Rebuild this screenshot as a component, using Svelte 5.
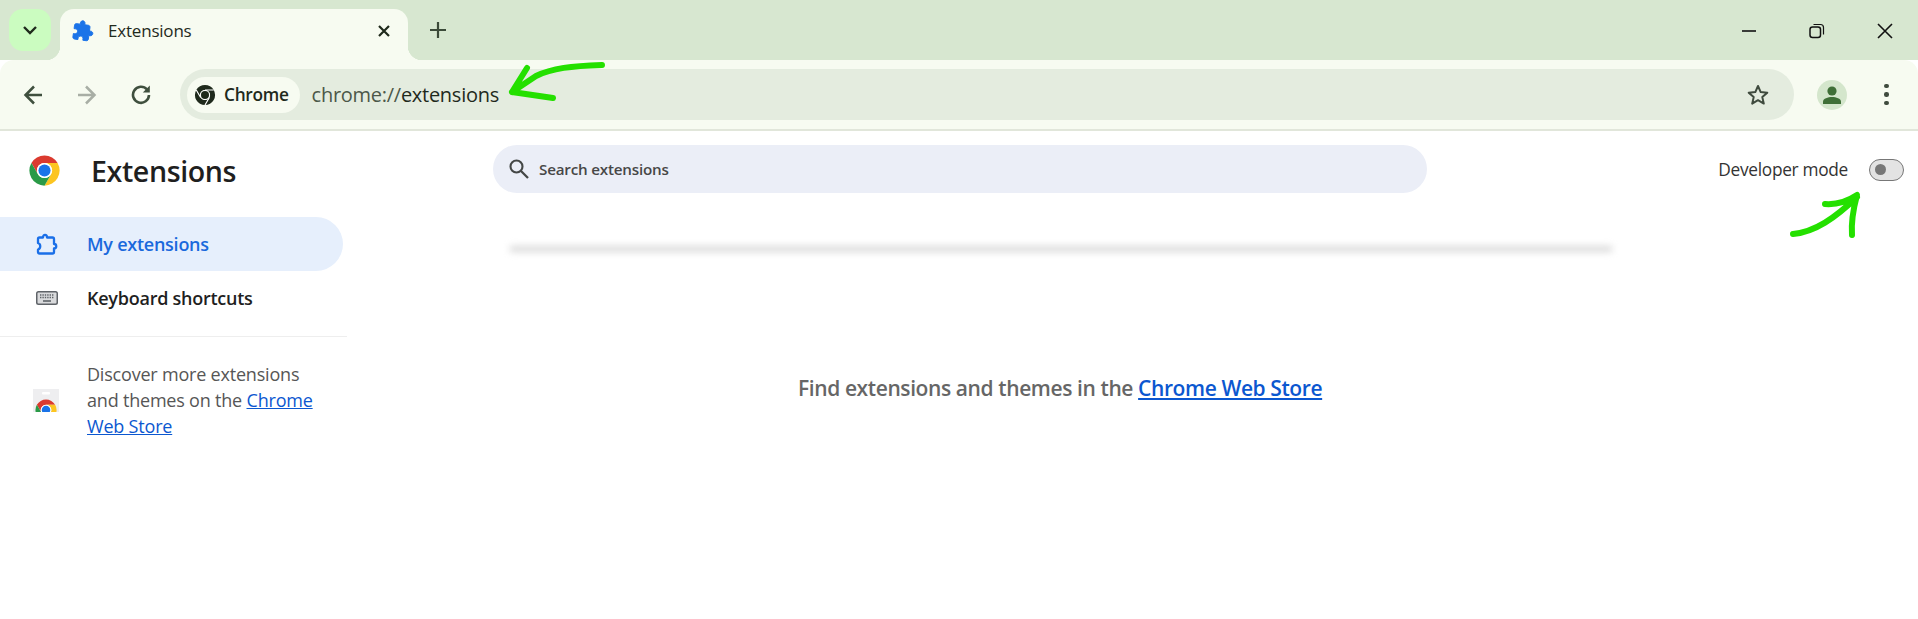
<script lang="ts">
  const promoUrl = "Chrome Web Store";
</script>

{#snippet chromeLogo(red: string, yellow: string, green: string, ring: string, dot: string)}
  <path fill={red} d="M43.05 13A22 22 0 0 0 4.95 13L14.47 29.5A11 11 0 0 1 24 13Z" />
  <path fill={yellow} d="M24 46A22 22 0 0 0 43.05 13L24 13A11 11 0 0 1 33.53 29.5Z" />
  <path fill={green} d="M4.95 13A22 22 0 0 0 24 46L33.53 29.5A11 11 0 0 1 14.47 29.5Z" />
  <circle cx="24" cy="24" r="11" fill={ring} />
  <circle cx="24" cy="24" r="8.8" fill={dot} />
{/snippet}

<div class="page">
  <header class="tabstrip">
    <button class="tab-search" aria-label="Search tabs">
      <svg width="16" height="10" viewBox="0 0 16 10"><path d="M2 2l6 6 6-6" fill="none" stroke="#1f2a1c" stroke-width="2.4" /></svg>
    </button>
    <div class="tab">
      <svg class="tab-icon" width="22" height="22" viewBox="0 0 24 24">
        <path fill="#1a73e8" stroke="#1a73e8" stroke-width="1" stroke-linejoin="round" transform="rotate(8 12 12)" d="M20.5 11H19V7c0-1.1-.9-2-2-2h-4V3.5C13 2.12 11.88 1 10.5 1S8 2.12 8 3.5V5H4c-1.1 0-1.99.9-1.99 2v3.8H3.5c1.49 0 2.7 1.21 2.7 2.7s-1.21 2.7-2.7 2.7H2V20c0 1.1.9 2 2 2h3.8v-1.5c0-1.49 1.21-2.7 2.7-2.7 1.49 0 2.7 1.21 2.7 2.7V22H17c1.1 0 2-.9 2-2v-4h1.5c1.38 0 2.5-1.12 2.5-2.5S21.88 11 20.5 11z" />
      </svg>
      <span class="tab-title">Extensions</span>
      <svg class="tab-close" width="14" height="14" viewBox="0 0 14 14"><path d="M2 2l10 10M12 2L2 12" stroke="#1f2a1c" stroke-width="2.2" /></svg>
    </div>
    <svg class="new-tab" width="20" height="20" viewBox="0 0 20 20"><path d="M10 2v16M2 10h16" stroke="#3b4a38" stroke-width="2.2" /></svg>
    <div class="window-controls">
      <svg width="16" height="16" viewBox="0 0 16 16"><path d="M1 8h14" stroke="#111" stroke-width="1.6" /></svg>
      <svg width="16" height="16" viewBox="0 0 16 16"><rect x="1" y="4" width="10.5" height="10.5" rx="2.5" fill="none" stroke="#111" stroke-width="1.5" /><path d="M4.5 1.5h7a3 3 0 0 1 3 3v7" fill="none" stroke="#111" stroke-width="1.2" /></svg>
      <svg width="16" height="16" viewBox="0 0 16 16"><path d="M1 1l14 14M15 1L1 15" stroke="#111" stroke-width="1.6" /></svg>
    </div>
  </header>

  <div class="toolbar">
    <svg class="nav-btn" width="20" height="20" viewBox="0 0 20 20"><path d="M19 10H2.500M11 1.500L2.500 10 11 18.500" fill="none" stroke="#3f4f3e" stroke-width="2.500" /></svg>
    <svg class="nav-btn" width="20" height="20" viewBox="0 0 20 20"><path d="M1 10h16.500M9 1.500l8.500 8.500L9 18.500" fill="none" stroke="#a8aea5" stroke-width="2.500" /></svg>
    <svg class="nav-btn" width="20" height="20" viewBox="0 0 20 20"><path d="M16 4.500A8 8 0 1 0 18 10" fill="none" stroke="#3f4f3e" stroke-width="2.600" /><path d="M18.800 0.500V7.500H11.800z" fill="#3f4f3e" /></svg>
    <div class="omnibox">
      <div class="chip">
        <svg width="22" height="22" viewBox="0 0 48 48">
          {@render chromeLogo("#1f2a1c", "#1f2a1c", "#1f2a1c", "#fff", "#1f2a1c")}
          <path d="M43.05 13H24M24 46L33.53 29.5M4.95 13L14.47 29.5" stroke="#fff" stroke-width="2.5" />
        </svg>
        <span>Chrome</span>
      </div>
      <span class="url"><span class="scheme">chrome://</span>extensions</span>
      <svg class="star" width="24" height="24" viewBox="0 0 24 24"><path d="M12 3l2.7 6.1 6.6.6-5 4.4 1.5 6.5-5.8-3.4-5.800 3.4 1.500-6.500-5-4.400 6.600-.6z" fill="none" stroke="#3f4b3e" stroke-width="2" stroke-linejoin="round" /></svg>
    </div>
    <div class="avatar">
      <svg width="20" height="20" viewBox="0 0 20 20"><circle cx="10" cy="6" r="4.600" fill="#3f6f37" /><path d="M1 19v-2.500C1 13.500 6 12 10 12s9 1.500 9 4.500V19z" fill="#3f6f37" /></svg>
    </div>
    <div class="dots"><i></i><i></i><i></i></div>
  </div>

  <main class="main">
    <aside class="sidebar">
      <div class="brand">
        <svg width="33" height="33" viewBox="0 0 48 48">
          {@render chromeLogo("#db3a2f", "#fcc521", "#2a9a47", "#fff", "#1a73e8")}
        </svg>
        <h1>Extensions</h1>
      </div>
      <a class="item active" href="#mine">
        <svg width="22" height="22" viewBox="0 0 22 22">
          <path d="M3.500 4.500H7C7 1 11 1 11 4.500H16.500Q18 4.500 18 6V11C21 11 21 15.500 18 15.500V19Q18 20.500 16.500 20.500H3.500Q2 20.500 2 19V16.500C5 15.500 5 11 2 10V6Q2 4.500 3.500 4.500Z" fill="none" stroke="#1a6fe8" stroke-width="2.300" stroke-linejoin="round" />
        </svg>
        <span>My extensions</span>
      </a>
      <a class="item" href="#keys">
        <svg width="22" height="14" viewBox="0 0 22 14">
          <rect x="0" y="0" width="22" height="14" rx="2.500" fill="#5f6368" />
          <rect x="1.500" y="1.500" width="19" height="11" rx="1" fill="#d9dadc" />
          <path d="M4 4h14M4 6.500h14" stroke="#5f6368" stroke-width="1.600" stroke-dasharray="1.400 1" />
          <path d="M7 10h8" stroke="#5f6368" stroke-width="1.600" />
        </svg>
        <span>Keyboard shortcuts</span>
      </a>
      <div class="promo">
        <svg width="26" height="23" viewBox="0 0 26 23">
          <defs><clipPath id="bag"><rect x="0" y="0" width="26" height="23" /></clipPath></defs>
          <rect width="26" height="23" fill="#eeeef0" />
          <rect x="9" y="3" width="8" height="2.500" rx="1" fill="#fff" />
          <g clip-path="url(#bag)">
            <g transform="translate(1.500 9.500) scale(0.48)">
              {@render chromeLogo("#db3a2f", "#fcc521", "#2a9a47", "#fff", "#1a73e8")}
            </g>
          </g>
        </svg>
        <p>Discover more extensions and themes on the <a href="#store">{promoUrl}</a></p>
      </div>
    </aside>

    <section class="content">
      <div class="topbar">
        <label class="search">
          <svg width="22" height="22" viewBox="0 0 22 22"><circle cx="8.500" cy="8.500" r="6" fill="none" stroke="#444746" stroke-width="2.100" /><path d="M13 13l7 7" stroke="#444746" stroke-width="2.300" /></svg>
          <span>Search extensions</span>
        </label>
        <div class="devmode">
          <span>Developer mode</span>
          <div class="toggle"><i></i></div>
        </div>
      </div>
      <div class="shadow-line"></div>
      <p class="empty">Find extensions and themes in the <a href="#store">{promoUrl}</a></p>
    </section>
  </main>

  <svg class="scribble" width="1918" height="619" viewBox="0 0 1918 619" fill="none" stroke="#24e000" stroke-width="6" stroke-linecap="round" stroke-linejoin="round">
    <path d="M602 65C572 66 552 68 536 76L512 92L553 98M527 68L512 92" />
    <path d="M1793 234C1815 232 1835 218 1857 197M1825 204C1838 205 1848 201 1857 195C1853 210 1851 222 1852 235" />
  </svg>
</div>

<style>
  :global(body) {
    margin: 0;
    background: #fff;
    font-family: "Open Sans", "Noto Sans", sans-serif;
  }

  .page {
    position: relative;
    height: 619px;
    overflow: hidden;
  }

  .tabstrip {
    height: 60px;
    background: #d7e7d0;
    display: flex;
    align-items: flex-start;
    box-sizing: border-box;
    padding: 9px 0 0 9px;
  }

  .tab-search {
    width: 42px;
    height: 42px;
    border: none;
    border-radius: 14px;
    background: #cbfcc0;
    display: flex;
    align-items: center;
    justify-content: center;
    padding: 0;
  }

  .tab {
    position: relative;
    margin-left: 9px;
    width: 348px;
    height: 51px;
    background: #f7fbf1;
    border-radius: 14px 14px 0 0;
    display: flex;
    align-items: center;
    padding: 0 12px 8px 12px;
    box-sizing: border-box;
  }

  .tab::before,
  .tab::after {
    content: "";
    position: absolute;
    bottom: 0;
    width: 14px;
    height: 14px;
    background: radial-gradient(circle at 0 0, transparent 14px, #f7fbf1 14.500px);
  }

  .tab::before {
    left: -14px;
  }

  .tab::after {
    right: -14px;
    transform: scaleX(-1);
  }

  .tab-icon {
    flex: none;
  }

  .tab-title {
    margin-left: 14px;
    flex: 1;
    font-size: 17px;
    color: #1f2a1c;
    letter-spacing: -0.2px;
  }

  .tab-close {
    margin-right: 5px;
  }

  .new-tab {
    margin: 11px 0 0 20px;
  }

  .window-controls {
    margin-left: auto;
    margin-top: 14px;
    display: flex;
    gap: 52px;
    padding-right: 25px;
  }

  .toolbar {
    height: 71px;
    background: #f7fbf1;
    border-bottom: 2px solid #e1e6da;
    border-radius: 14px 14px 0 0;
    display: flex;
    align-items: center;
    padding: 0 0 0 23px;
    box-sizing: border-box;
  }

  .nav-btn {
    margin-right: 34px;
    flex: none;
  }

  .omnibox {
    margin-left: -5px;
    width: 1614px;
    height: 51px;
    border-radius: 26px;
    background: #e4ecdf;
    display: flex;
    align-items: center;
    padding: 0 24px 0 7px;
    box-sizing: border-box;
    flex: none;
  }

  .chip {
    height: 36px;
    background: #f7fbf1;
    border-radius: 18px;
    display: flex;
    align-items: center;
    gap: 8px;
    padding: 0 11px 0 7px;
    font-size: 17.3px;
    font-weight: 600;
    color: #1f2a1c;
    letter-spacing: -0.3px;
  }

  .url {
    margin-left: 12px;
    flex: 1;
    font-size: 20px;
    color: #1f2a1c;
    letter-spacing: -0.27px;
  }

  .scheme {
    color: #4c5849;
  }

  .avatar {
    margin-left: 23px;
    width: 30px;
    height: 30px;
    border-radius: 50%;
    background: #d4e6cc;
    display: flex;
    align-items: center;
    justify-content: center;
    flex: none;
  }

  .dots {
    margin-left: 37px;
    display: flex;
    flex-direction: column;
    gap: 4px;
  }

  .dots i {
    width: 4.500px;
    height: 4.500px;
    border-radius: 50%;
    background: #3f4b3e;
  }

  .main {
    display: grid;
    grid-template-columns: 347px 1fr;
  }

  .sidebar {
    display: flex;
    flex-direction: column;
  }

  .brand {
    height: 86px;
    display: flex;
    align-items: center;
    gap: 30px;
    padding: 0 0 8px 28px;
    box-sizing: border-box;
  }

  h1 {
    margin: 0;
    font-size: 28.6px;
    font-weight: 600;
    color: #1f1f1f;
    letter-spacing: -0.4px;
  }

  .item {
    width: 343px;
    height: 54px;
    display: flex;
    align-items: center;
    gap: 29px;
    padding-left: 36px;
    box-sizing: border-box;
    border-radius: 0 27px 27px 0;
    text-decoration: none;
    font-size: 18px;
    font-weight: 600;
    color: #1f1f1f;
    letter-spacing: -0.25px;
  }

  .item.active {
    background: #e6effc;
    color: #1a69dc;
  }

  .promo {
    margin-top: 11px;
    border-top: 1px solid #eeeeee;
    display: flex;
    align-items: center;
    gap: 28px;
    padding: 24px 28px 0 33px;
  }

  .promo svg {
    flex: none;
  }

  .promo p {
    margin: 0;
    font-size: 18px;
    line-height: 26px;
    color: #565656;
    letter-spacing: -0.2px;
  }

  .promo a,
  .empty a {
    color: #0b57d0;
  }

  .content {
    display: flex;
    flex-direction: column;
    min-width: 0;
  }

  .topbar {
    height: 86px;
    display: flex;
    align-items: flex-start;
    padding-top: 14px;
    box-sizing: border-box;
  }

  .search {
    margin-left: 146px;
    width: 934px;
    height: 48px;
    border-radius: 24px;
    background: #ebeef7;
    display: flex;
    align-items: center;
    gap: 9px;
    padding-left: 15px;
    box-sizing: border-box;
    font-size: 15.2px;
    font-weight: 600;
    color: #474747;
    letter-spacing: -0.2px;
  }

  .devmode {
    margin-left: auto;
    margin-right: 14px;
    margin-top: 13px;
    display: flex;
    align-items: center;
    gap: 21px;
    font-size: 17.3px;
    color: #333;
    letter-spacing: -0.3px;
  }

  .toggle {
    width: 35px;
    height: 22px;
    box-sizing: border-box;
    border: 1px solid #777;
    border-radius: 11px;
    background: #e3e3e3;
    display: flex;
    align-items: center;
    padding-left: 5px;
  }

  .toggle i {
    width: 11px;
    height: 11px;
    border-radius: 50%;
    background: #777;
  }

  .shadow-line {
    margin: 29px 0 0 163px;
    width: 1102px;
    height: 6px;
    background: #d9d9d9;
    filter: blur(3.5px);
  }

  .empty {
    margin: 122px 0 0 451px;
    font-size: 21px;
    font-weight: 600;
    color: #666;
    letter-spacing: -0.4px;
    white-space: nowrap;
  }

  .scribble {
    position: absolute;
    inset: 0;
    pointer-events: none;
  }
</style>
